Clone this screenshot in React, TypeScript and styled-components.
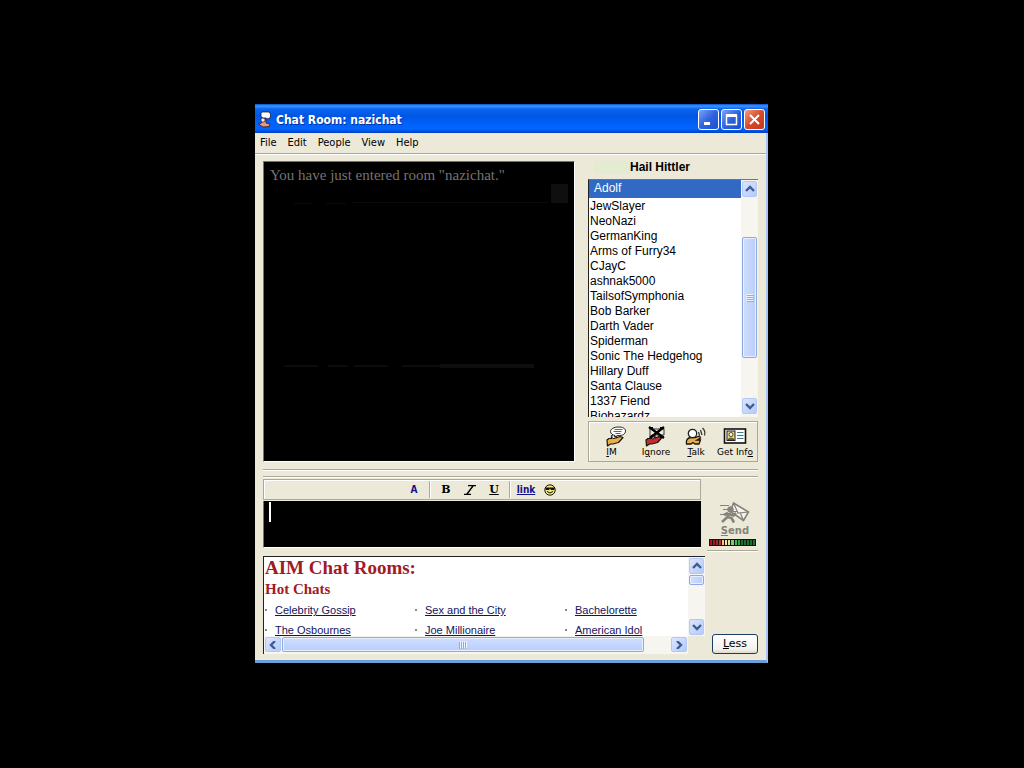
import React from "react";
import styled, { createGlobalStyle } from "styled-components";

const GlobalStyle = createGlobalStyle`
  * { box-sizing: border-box; }
  body { margin: 0; background: #000; font-family: "Liberation Sans", Arial, sans-serif; color: #000; }
  button { font: inherit; color: inherit; border: 0; padding: 0; background: none; }
  ul { list-style: none; margin: 0; padding: 0; }
`;

const Desktop = styled.main`
  display: flex;
  justify-content: center;
  align-items: flex-start;
  min-height: 100vh;
  padding: 104px 1px 24px 0;
  background: #000;
`;

const ChatWindow = styled.section`
  width: 50%;
  min-width: 513px;
  background: #ece9d8;
  border-right: 2px solid #a9c4f4;
  border-bottom: 3px solid #6d9fd6;
`;

const TitleBar = styled.header`
  display: flex;
  align-items: center;
  height: 29px;
  padding: 2px 0 0 3px;
  margin-right: -2px;
  color: #fff;
  background: linear-gradient(#0a4fd0 0, #3c96ff 2px, #0a66f0 5px, #0056e4 12px, #0062fa 20px, #0066ff 25px, #003fc0 29px);
`;

const Title = styled.h1`
  flex: 1;
  margin: 0 0 0 5px;
  font: bold 12px/18px "DejaVu Sans Condensed", "DejaVu Sans", sans-serif;
  text-shadow: 1px 1px #0a2f9a;
`;

const WindowButtons = styled.div`
  display: flex;
  gap: 2px;
  padding-right: 3px;
`;

const WindowButton = styled.button<{ $danger?: boolean }>`
  display: grid;
  place-items: center;
  width: 21px;
  height: 21px;
  border: 1px solid #fff;
  border-radius: 3px;
  background: ${(p) =>
    p.$danger
      ? "linear-gradient(135deg, #f0a080, #d8492a 50%, #c03a1c)"
      : "linear-gradient(135deg, #7aa4f4, #2f62e0 50%, #1c50c8)"};
`;

const MenuBar = styled.nav`
  display: flex;
  gap: 11px;
  height: 21px;
  padding-left: 5px;
  border-bottom: 1px solid #aca899;
  box-shadow: 0 1px #fff;
`;

const MenuItem = styled.button`
  font: 11px/18px "DejaVu Sans Condensed", "DejaVu Sans", sans-serif;
`;

const Content = styled.div`
  padding: 7px 8px 6px;
`;

const TopRow = styled.div`
  display: grid;
  grid-template-columns: 1fr 170px;
  gap: 13px;
  height: 301px;
`;

const Transcript = styled.div`
  display: flex;
  flex-direction: column;
  padding: 4px 6px;
  background: #000;
  border: 1px solid #77756a;
  border-right-color: #fff;
  border-bottom-color: #fff;
`;

const Message = styled.p`
  margin: 0;
  font: 15px/18px "Liberation Serif", "Times New Roman", serif;
  color: #747474;
`;

const Traces = styled.svg`
  display: block;
  width: 100%;
  height: 210px;
`;

const People = styled.div`
  display: flex;
  flex-direction: column;
`;

const RoomName = styled.h2`
  height: 18px;
  margin: 0;
  padding-right: 26px;
  font-size: 12px;
  line-height: 12px;
  background: linear-gradient(#e3ebd0, #e3ebd0) 6px 0 / 36px 13px no-repeat;
  text-align: center;
`;

const Roster = styled.div`
  display: grid;
  grid-template-columns: 1fr 17px;
  height: 238px;
  background: #fff;
  border-left: 1px solid #222;
  border-top: 1px solid #77756a;
  overflow: hidden;
`;

const Names = styled.ul`
  overflow: hidden;
`;

const Name = styled.li<{ $selected?: boolean }>`
  padding-left: ${(p) => (p.$selected ? "5px" : "1px")};
  font-size: 12px;
  line-height: ${(p) => (p.$selected ? "16px" : "17px")};
  height: ${(p) => (p.$selected ? "18px" : "15px")};
  color: ${(p) => (p.$selected ? "#fff" : "#000")};
  background: ${(p) => (p.$selected ? "#316ac5" : "transparent")};
`;

const Bar = styled.div<{ $horizontal?: boolean; $end?: number }>`
  display: flex;
  flex-direction: ${(p) => (p.$horizontal ? "row" : "column")};
  gap: 1px;
  padding: 1px 1px ${(p) => p.$end ?? 1}px;
  background: #f6f5ef;
`;

const ArrowButton = styled.button`
  display: grid;
  place-items: center;
  flex: 0 0 16px;
  min-width: 15px;
  border: 1px solid #b4c8f6;
  border-radius: 2px;
  background: linear-gradient(135deg, #dbe6ff, #b4cafa);
`;

const Space = styled.div<{ $grow: number }>`
  flex: ${(p) => p.$grow} 1 0;
`;

const Thumb = styled.div<{ $grow: number; $horizontal?: boolean }>`
  display: grid;
  place-items: center;
  flex: ${(p) => p.$grow} 1 0;
  border: 1px solid #8faae0;
  border-radius: 2px;
  box-shadow: inset 0 0 0 1px #e6eeff;
  background: linear-gradient(${(p) => (p.$horizontal ? "180deg" : "90deg")}, #cfdeff, #b9cefb);
`;

const Actions = styled.div`
  display: flex;
  height: 41px;
  margin-top: 4px;
  border: 1px solid #aca899;
  box-shadow: inset 1px 1px #fff;
`;

const Action = styled.button<{ $width: number }>`
  display: flex;
  flex-direction: column;
  align-items: center;
  flex: 0 0 ${(p) => p.$width}px;
  padding-top: 4px;
  font: 9px/11px "DejaVu Sans", sans-serif;
  white-space: nowrap;
`;

const Divider = styled.div`
  height: 8px;
  margin: 7px 0 2px;
  border: solid #aca899;
  border-width: 1px 0;
  box-shadow: inset 0 1px #fff, 0 1px #fff;
`;

const LowerRow = styled.div<{ $height: number; $top?: number }>`
  display: grid;
  grid-template-columns: 1fr 51px;
  column-gap: 2px;
  height: ${(p) => p.$height}px;
  margin-top: ${(p) => p.$top ?? 0}px;
`;

const Composer = styled.div`
  margin-right: 4px;
`;

const Toolbar = styled.div`
  display: flex;
  justify-content: center;
  align-items: center;
  height: 21px;
  border: 1px solid #aca899;
  box-shadow: inset 1px 1px #fff;
`;

const Tool = styled.button<{ $link?: boolean }>`
  display: grid;
  place-items: center;
  width: 24px;
  height: 18px;
  font: bold 11px/14px ${(p) => (p.$link ? `"DejaVu Sans Condensed", sans-serif` : `"DejaVu Serif", serif`)};
  font-size: ${(p) => (p.$link ? "10px" : "11px")};
  color: ${(p) => (p.$link ? "#10108a" : "#000")};
`;

const Slanted = styled.i`
  font-weight: normal;
`;

const Separator = styled.div`
  width: 2px;
  height: 17px;
  margin: 0 3px;
  background: linear-gradient(90deg, #aca899 1px, #fff 1px);
`;

const InputWrap = styled.div`
  position: relative;
  height: 47px;
  margin-top: 1px;
`;

const MessageBox = styled.textarea`
  display: block;
  width: 100%;
  height: 100%;
  padding: 4px 6px;
  border: solid #77756a;
  border-width: 0 0 0 1px;
  border-bottom: 1px solid #fff;
  border-radius: 0;
  outline: 0;
  resize: none;
  color: #fff;
  background: #000;
  font: 15px/18px "Liberation Serif", serif;
`;

const Caret = styled.span`
  position: absolute;
  left: 6px;
  top: 1px;
  width: 2px;
  height: 20px;
  background: #fff;
`;

const SendPane = styled.div`
  display: flex;
  flex-direction: column;
  align-items: center;
  border-bottom: 1px solid #aca899;
  box-shadow: 0 1px #fff;
  padding-top: 23px;
`;

const SendButton = styled.button`
  display: flex;
  flex-direction: column;
  align-items: center;
  width: 100%;
  padding-left: 5px;
  font: bold 10px/13px "DejaVu Sans", sans-serif;
  color: #85837b;
`;

const Meter = styled.div`
  display: flex;
  gap: 1px;
  width: 47px;
  height: 7px;
  margin-top: 2px;
  padding: 1px;
  background: #141414;
`;

const Cell = styled.span<{ $color: string }>`
  flex: 1;
  background: ${(p) => p.$color};
`;

const Directory = styled.div`
  display: grid;
  grid-template: minmax(0, 1fr) 18px / minmax(0, 1fr) 17px;
  border-left: 1px solid #222;
  border-top: 1px solid #222;
  height: 98px;
`;

const Rooms = styled.div`
  overflow: hidden;
  background: #fff;
  font-family: "Liberation Serif", "Times New Roman", serif;
  color: #a01c24;
`;

const RoomsTitle = styled.h2`
  margin: 0 0 0 1px;
  font-size: 19px;
  line-height: 22px;
`;

const RoomsSubtitle = styled.h3`
  margin: 0 0 0 1px;
  font-size: 15px;
  line-height: 21px;
`;

const RoomGrid = styled.ul`
  display: grid;
  grid-template-columns: repeat(3, 150px);
`;

const RoomItem = styled.li`
  display: flex;
  align-items: center;
  height: 20px;
  padding-left: 1px;
  font: 11px/20px "Liberation Sans", Arial, sans-serif;
  &::before {
    content: "";
    width: 2px;
    height: 2px;
    margin-right: 8px;
    background: #888;
  }
`;

const RoomLink = styled.a`
  color: #14145a;
  text-decoration: underline;
`;

const Side = styled.div`
  display: flex;
  align-items: flex-end;
  justify-content: flex-end;
`;

const LessButton = styled.button`
  width: 46px;
  height: 20px;
  border: 1px solid #1c3c64;
  border-radius: 3px;
  background: linear-gradient(#fff, #f2f1ea 80%, #dcd8cc);
  font: 11px/18px "DejaVu Sans", sans-serif;
`;

const arrows: Record<string, string> = {
  up: "M1 6 5 2 9 6",
  down: "M1 2 5 6 9 2",
  left: "M7 0 3 4 7 8",
  right: "M3 0 7 4 3 8",
};

function Arrow({ to }: { to: string }) {
  return (
    <ArrowButton aria-label={`Scroll ${to}`}>
      <svg width="10" height="8" viewBox="0 0 10 8">
        <path d={arrows[to]} fill="none" stroke="#3f5c92" strokeWidth="2.4" />
      </svg>
    </ArrowButton>
  );
}

function Grip({ vertical }: { vertical?: boolean }) {
  return (
    <svg width="8" height="8" viewBox="0 0 8 8">
      <g transform={vertical ? undefined : "rotate(90 4 4)"}>
        <path d="M0 .5h7M0 2.5h7M0 4.5h7M0 6.5h7" stroke="#eef4ff" />
        <path d="M1 1.5h7M1 3.5h7M1 5.5h7M1 7.5h7" stroke="#8fabe8" />
      </g>
    </svg>
  );
}

const Hand = ({ color }: { color: string }) => (
  <path
    d="M1 14 3 12.500H5.500L5.500 10 8 8.500 10 10V12L14 10.500 17 11.500 12.500 16.500 7 18H4.500L1.500 20Z"
    fill={color}
    stroke="#1a1208"
    strokeWidth="1.2"
    strokeLinejoin="round"
  />
);

const ImIcon = () => (
  <svg width="32" height="21" viewBox="-10 0 32 21">
    <Hand color="#e8b04c" />
    <circle cx="8" cy="10.500" r="2.200" fill="#fff" stroke="#222" />
    <path d="M9 9.500 8 11 12 9.500C17 10 19.500 7.500 19.500 5S17 1 12.500 1 4.500 3 4.500 5.500 7 9 9 9.500Z" fill="#fff" stroke="#222" />
    <path d="M8.500 3.500h8M7.500 5.500h8M9.500 7.500h5" stroke="#666" />
  </svg>
);

const IgnoreIcon = () => (
  <svg width="22" height="21" viewBox="0 0 22 21">
    <Hand color="#c02c30" />
    <path d="M5 3h14v6H9L5 12Z" fill="#ece9d8" stroke="#333" />
    <circle cx="7.500" cy="11" r="2" fill="#e89090" stroke="#222" />
    <path d="M4 1 19 12M19 1 5 12" stroke="#000" strokeWidth="2.300" />
    <path d="M4 2h4M15 2h4M15 11h4" stroke="#000" strokeWidth="2" />
  </svg>
);

const TalkIcon = () => (
  <svg width="22" height="21" viewBox="0 0 22 21">
    <path d="M1.500 18C.5 14 3 11.500 6 11.500H10L14.500 10 15.500 12 12 14H15.500L14 18H10L8 16.500 6 18Z" fill="#e8b04c" stroke="#1a1208" strokeWidth="1.300" />
    <circle cx="7.500" cy="7.500" r="4.200" fill="#fff" stroke="#222" strokeWidth="1.300" />
    <path d="M13.500 6 14.500 9M15.500 4 17 9M17.500 2C19.500 4 20.500 6.500 19.500 9.500" fill="none" stroke="#333" strokeWidth="1.200" />
  </svg>
);

const InfoIcon = () => (
  <svg width="24" height="21" viewBox="0 0 24 21">
    <rect x="1.500" y="3" width="21" height="14" fill="#fff" stroke="#111" strokeWidth="1.600" />
    <rect x="4" y="5" width="8" height="9.500" fill="#ead77a" stroke="#222" />
    <path d="M5 14C5 11.500 11 11.500 11 14Z" fill="#b08020" stroke="#222" strokeWidth=".7" />
    <circle cx="8" cy="8.500" r="2" fill="#fff" stroke="#222" strokeWidth=".8" />
    <path d="M14 6.500h6.500M14 9.500h6.500M14 12.500h6.500" stroke="#3d7a90" />
  </svg>
);

const SendIcon = () => (
  <svg width="30" height="22" viewBox="0 0 30 22" fill="none" stroke="#85837b">
    <path d="M0 3.500h9M3 7.500h6M0 12.500h5" />
    <path d="M13.500 1 28.500 10 23.500 18.500 10.500 9.500Z" fill="#f5f4ec" strokeWidth="1.600" />
    <path d="M13.500 1 18 11 28.500 10M10.500 9.500 17 9.500M23.500 18.500 20.500 11.500" strokeWidth="1.200" />
    <circle cx="10.500" cy="7.500" r="2.800" fill="#85837b" />
    <path d="M9 11 7 15.500 2 20M7.500 15 11.500 16 14 20.500M9 12 13.500 13.500 16 11M8 11 4 13" strokeWidth="2.600" />
  </svg>
);

const AppIcon = () => (
  <svg width="13" height="18" viewBox="0 0 13 18">
    <path d="M0 12 3 12.500 4 9.500 8 9 8 12 12 13 11 15.500 5 16 1 13.500Z" fill="#e89888" stroke="#401818" strokeWidth=".8" />
    <circle cx="5" cy="9" r="2.200" fill="#eee" stroke="#222" strokeWidth=".8" />
    <path d="M4 1H11L12.500 3V6L10 8 8 7 5 7 3 5.500V2Z" fill="#fff" stroke="#223" strokeWidth=".8" />
  </svg>
);

const Smiley = () => (
  <svg width="12" height="12" viewBox="0 0 12 12">
    <circle cx="6" cy="6" r="5.200" fill="#f4e878" stroke="#111" />
    <path d="M1 3.500H11L10 6H7L6 4.500 5 6H2Z" fill="#111" />
    <path d="M3 7.500Q6 10.500 9 7.500" fill="none" stroke="#111" />
  </svg>
);

const people = [
  "JewSlayer", "NeoNazi", "GermanKing", "Arms of Furry34", "CJayC", "ashnak5000", "TailsofSymphonia",
  "Bob Barker", "Darth Vader", "Spiderman", "Sonic The Hedgehog", "Hillary Duff", "Santa Clause",
  "1337 Fiend", "Biohazardz",
];

const rooms = [
  "Celebrity Gossip", "Sex and the City", "Bachelorette", "The Osbournes", "Joe Millionaire", "American Idol",
];

const cells = [
  "#a01c1c", "#a01c1c", "#b02020", "#b83030", "#f0c890", "#f4e8a0", "#e0e890", "#70d070",
  "#40b850", "#30a040", "#1c7030", "#1c7030", "#1c7030", "#1c7030", "#1c7030",
];

export default function App() {
  return (
    <Desktop>
      <GlobalStyle />
      <ChatWindow>
        <TitleBar>
          <AppIcon />
          <Title>Chat Room: nazichat</Title>
          <WindowButtons>
            <WindowButton aria-label="Minimize">
              <svg width="15" height="15"><path d="M3 11.500h6" stroke="#fff" strokeWidth="3" /></svg>
            </WindowButton>
            <WindowButton aria-label="Maximize">
              <svg width="15" height="15"><path d="M2.500 3v9.500h10V3M2 3.500h11" fill="none" stroke="#fff" strokeWidth="1.500" /><path d="M2 3.500h11" stroke="#fff" strokeWidth="3" /></svg>
            </WindowButton>
            <WindowButton $danger aria-label="Close">
              <svg width="15" height="15"><path d="M3 3 12 12M12 3 3 12" stroke="#fff" strokeWidth="2" /></svg>
            </WindowButton>
          </WindowButtons>
        </TitleBar>
        <MenuBar>
          {["File", "Edit", "People", "View", "Help"].map((m) => <MenuItem key={m}>{m}</MenuItem>)}
        </MenuBar>
        <Content>
          <TopRow>
            <Transcript>
              <Message>You have just entered room "nazichat."</Message>
              <Traces viewBox="0 0 298 210" preserveAspectRatio="none" aria-hidden="true">
                <path d="M281 0h17v19h-17z" fill="#0f0f0f" />
                <path d="M24 19.500h18M56 19.500h20M82 18.500h196" stroke="#0c0c0c" />
                <path d="M14 182h34M58 182h20M84 182h34M132 182h132" stroke="#0b0b0b" strokeWidth="2" />
                <path d="M170 182h94" stroke="#0e0e0e" strokeWidth="4" />
              </Traces>
            </Transcript>
            <People>
              <RoomName>Hail Hittler</RoomName>
              <Roster>
                <Names>
                  <Name $selected>Adolf</Name>
                  {people.map((n) => <Name key={n}>{n}</Name>)}
                </Names>
                <Bar $end={3}>
                  <Arrow to="up" />
                  <Space $grow={38} />
                  <Thumb $grow={120}><Grip vertical /></Thumb>
                  <Space $grow={38} />
                  <Arrow to="down" />
                </Bar>
              </Roster>
              <Actions>
                <Action $width={45}><ImIcon /><span><u>I</u>M</span></Action>
                <Action $width={44}><IgnoreIcon /><span>I<u>g</u>nore</span></Action>
                <Action $width={36}><TalkIcon /><span><u>T</u>alk</span></Action>
                <Action $width={42}><InfoIcon /><span>Get Inf<u>o</u></span></Action>
              </Actions>
            </People>
          </TopRow>
          <Divider />
          <LowerRow $height={72}>
            <Composer>
              <Toolbar>
                <Tool $link aria-label="Text color">A</Tool>
                <Separator />
                <Tool>B</Tool>
                <Tool aria-label="Italic">
                  <svg width="12" height="10" viewBox="0 0 12 10"><path d="M4 .5h8M0 9.500h7M9 1 3 9" stroke="#000" strokeWidth="1.400" /></svg>
                </Tool>
                <Tool><u>U</u></Tool>
                <Separator />
                <Tool $link><u>link</u></Tool>
                <Tool aria-label="Smiley"><Smiley /></Tool>
              </Toolbar>
              <InputWrap>
                <MessageBox aria-label="Message" />
                <Caret />
              </InputWrap>
            </Composer>
            <SendPane>
              <SendButton><SendIcon /><span><u>S</u>end</span></SendButton>
              <Meter>{cells.map((c, i) => <Cell key={i} $color={c} />)}</Meter>
            </SendPane>
          </LowerRow>
          <LowerRow $height={98} $top={5}>
            <Directory>
              <Rooms>
                <RoomsTitle>AIM Chat Rooms:</RoomsTitle>
                <RoomsSubtitle>Hot Chats</RoomsSubtitle>
                <RoomGrid>
                  {rooms.map((r) => <RoomItem key={r}><RoomLink href="#">{r}</RoomLink></RoomItem>)}
                </RoomGrid>
              </Rooms>
              <Bar>
                <Arrow to="up" />
                <Thumb $grow={9} />
                <Space $grow={36} />
                <Arrow to="down" />
              </Bar>
              <Bar $horizontal $end={2}>
                <Arrow to="left" />
                <Thumb $horizontal $grow={362}><Grip /></Thumb>
                <Space $grow={25} />
                <Arrow to="right" />
              </Bar>
            </Directory>
            <Side>
              <LessButton><u>L</u>ess</LessButton>
            </Side>
          </LowerRow>
        </Content>
      </ChatWindow>
    </Desktop>
  );
}
